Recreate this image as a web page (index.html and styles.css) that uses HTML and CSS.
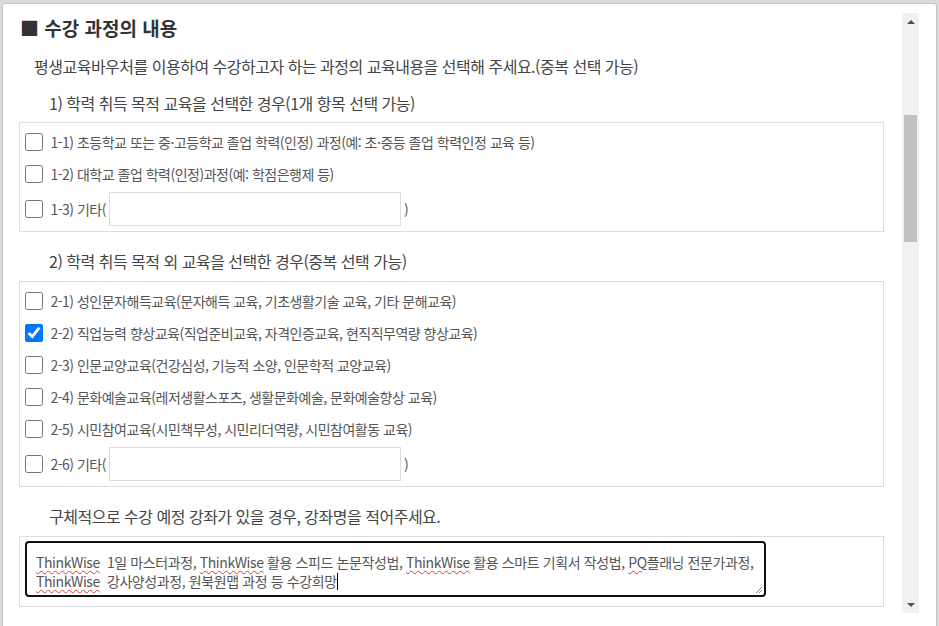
FILE: index.html
```html
<!DOCTYPE html>
<html lang="ko">

<head>
    <meta charset="UTF-8">
    <meta name="viewport" content="width=device-width, initial-scale=1.0">
    <title>수강 과정의 내용</title>
    <link rel="stylesheet" href="styles.css">
</head>

<body>
    <div class="panel">
        <div class="content">
            <h2 class="title">■ 수강 과정의 내용</h2>
            <p class="intro">평생교육바우처를 이용하여 수강하고자 하는 과정의 교육내용을 선택해 주세요.(중복 선택 가능)</p>

            <p class="sub">1) 학력 취득 목적 교육을 선택한 경우(1개 항목 선택 가능)</p>
            <div class="box">
                <label class="row"><input type="checkbox"> 1-1) 초등학교 또는 중·고등학교 졸업 학력(인정) 과정(예: 초·중등 졸업 학력인정 교육 등)</label>
                <label class="row"><input type="checkbox"> 1-2) 대학교 졸업 학력(인정)과정(예: 학점은행제 등)</label>
                <label class="row row-etc"><input type="checkbox"> 1-3) 기타(<span class="etc-input"></span>)</label>
            </div>

            <p class="sub">2) 학력 취득 목적 외 교육을 선택한 경우(중복 선택 가능)</p>
            <div class="box">
                <label class="row"><input type="checkbox"> 2-1) 성인문자해득교육(문자해득 교육, 기초생활기술 교육, 기타 문해교육)</label>
                <label class="row"><input type="checkbox" checked> 2-2) 직업능력 향상교육(직업준비교육, 자격인증교육, 현직직무역량 향상교육)</label>
                <label class="row"><input type="checkbox"> 2-3) 인문교양교육(건강심성, 기능적 소양, 인문학적 교양교육)</label>
                <label class="row"><input type="checkbox"> 2-4) 문화예술교육(레저생활스포츠, 생활문화예술, 문화예술향상 교육)</label>
                <label class="row"><input type="checkbox"> 2-5) 시민참여교육(시민책무성, 시민리더역량, 시민참여활동 교육)</label>
                <label class="row row-etc"><input type="checkbox"> 2-6) 기타(<span class="etc-input"></span>)</label>
            </div>

            <p class="sub">구체적으로 수강 예정 강좌가 있을 경우, 강좌명을 적어주세요.</p>
            <div class="box box-memo">
                <div class="memo">
                    <span class="typo">ThinkWise</span>&nbsp; 1일 마스터과정, <span class="typo">ThinkWise</span> 활용 스피드 논문작성법, <span class="typo">ThinkWise</span> 활용 스마트 기획서 작성법, <span class="typo">PQ</span>플래닝 전문가과정,<br>
                    <span class="typo">ThinkWise</span>&nbsp; 강사양성과정, 원북원맵 과정 등 수강희망<span class="caret"></span>
                    <svg class="grip" width="8" height="8" viewBox="0 0 8 8">
                        <path d="M7 1 L1 7 M7 4 L4 7" stroke="#888" stroke-width="1"/>
                    </svg>
                </div>
            </div>
        </div>

        <div class="scrollbar">
            <div class="sb-btn"><span class="arrow-up"></span></div>
            <div class="sb-track"><div class="sb-thumb"></div></div>
            <div class="sb-btn"><span class="arrow-down"></span></div>
        </div>
    </div>
</body>

</html>
```

FILE: styles.css
```css
html, body {
    margin: 0;
    height: 100%;
    overflow: hidden;
}

body {
    background: #dadada;
    font-family: "Noto Sans CJK KR", "Noto Sans", sans-serif;
    color: #555;
    letter-spacing: -0.5px;
}

.panel {
    display: flex;
    margin: 3px 2px 0 2px;
    height: 660px;
    background: #fff;
    border: 1px solid #c4c4c4;
    border-radius: 3px 3px 0 0;
}

.content {
    flex: 0 0 865px;
    padding-left: 16px;
}

.title {
    margin: 0;
    padding: 10px 0 0 1px;
    font-size: 19px;
    line-height: 28px;
    font-weight: bold;
    letter-spacing: 0;
    color: #333;
}

.intro {
    margin: 13px 0 0;
    padding-left: 15px;
    font-size: 16px;
    line-height: 22px;
    color: #444;
}

.sub {
    margin: 15px 0 8px;
    padding-left: 30px;
    font-size: 16px;
    line-height: 22px;
    color: #444;
}

.box + .sub {
    margin-top: 18px;
    margin-bottom: 9px;
}

.box {
    border: 1px solid #ddd;
    padding: 3px 5px;
}

.box-memo {
    padding: 4px 5px 9px;
}

.row {
    display: flex;
    align-items: center;
    height: 32px;
    font-size: 14px;
    color: #555;
    white-space: pre;
}

.row input {
    width: 18px;
    height: 18px;
    margin: 0 4px 0 0;
}

.row-etc {
    height: 38px;
}

.etc-input {
    display: inline-block;
    width: 290px;
    height: 32px;
    border: 1px solid #ddd;
    margin: 0 3px 0 3px;
}

.memo {
    position: relative;
    width: 719px;
    height: 41px;
    padding: 10px 9px 1px;
    border: 2px solid #111;
    border-radius: 4px;
    font-size: 14px;
    line-height: 19px;
    letter-spacing: -0.4px;
    color: #555;
}

.typo {
    text-decoration: underline wavy #d43c3c;
    text-decoration-thickness: 1px;
    text-underline-offset: 2px;
}

.caret {
    display: inline-block;
    width: 1px;
    height: 17px;
    background: #000;
    vertical-align: -3px;
}

.grip {
    position: absolute;
    right: 1px;
    bottom: 1px;
}

.scrollbar {
    display: flex;
    flex-direction: column;
    width: 17px;
    height: 600px;
    margin: 9px 0 0 18px;
    background: #f1f1f1;
}

.sb-btn {
    height: 17px;
    display: flex;
    align-items: center;
    justify-content: center;
}

.arrow-up {
    border-left: 4px solid transparent;
    border-right: 4px solid transparent;
    border-bottom: 4px solid #505050;
}

.arrow-down {
    border-left: 4px solid transparent;
    border-right: 4px solid transparent;
    border-top: 4px solid #505050;
}

.sb-track {
    flex: 1;
    padding: 85px 2px 0;
}

.sb-thumb {
    height: 127px;
    background: #c1c1c1;
}
```
